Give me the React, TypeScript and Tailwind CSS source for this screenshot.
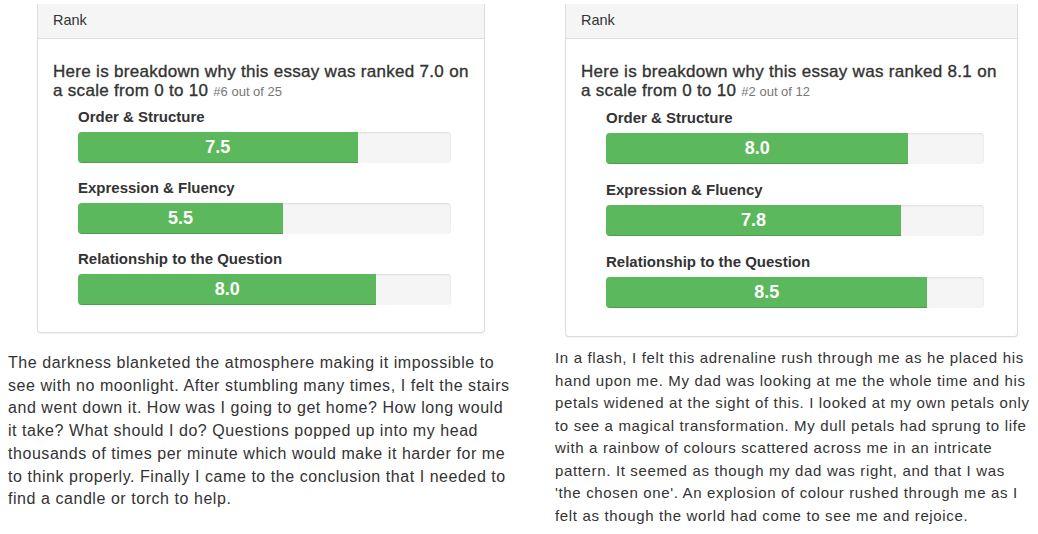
import React from "react";

type Metric = { label: string; score: number };

const left: Metric[] = [
  { label: "Order & Structure", score: 7.5 },
  { label: "Expression & Fluency", score: 5.5 },
  { label: "Relationship to the Question", score: 8.0 },
];

const right: Metric[] = [
  { label: "Order & Structure", score: 8.0 },
  { label: "Expression & Fluency", score: 7.8 },
  { label: "Relationship to the Question", score: 8.5 },
];

function Bar({ score }: { score: number }) {
  return (
    <div className="h-[31px] w-full rounded-[4px] bg-[#f5f5f5] shadow-[inset_0_1px_2px_rgba(0,0,0,0.1)] overflow-hidden">
      <div
        className="h-full bg-[#5cb85c] shadow-[inset_0_-1px_0_rgba(0,0,0,0.15)] text-center text-white font-bold text-[18px] leading-[31px]"
        style={{ width: `${score * 10}%` }}
      >
        {score.toFixed(1)}
      </div>
    </div>
  );
}

function RankPanel({
  ranked,
  place,
  of,
  metrics,
  roomy,
}: {
  ranked: string;
  place: number;
  of: number;
  metrics: Metric[];
  roomy?: boolean;
}) {
  return (
    <div className="border border-t-0 border-[#ddd] rounded-b-[4px] bg-white shadow-[0_1px_1px_rgba(0,0,0,0.05)]">
      <div className="bg-[#f5f5f5] border-b border-[#ddd] px-[15px] h-[35px] flex items-center text-[14.5px] text-[#333]">
        Rank
      </div>
      <div className="pt-[23px] pb-[12px] px-[15px]">
        <h4
          className={`text-[17px] leading-[19px] tracking-[0.3px] text-[#333] [-webkit-text-stroke:0.35px_#333] ${
            roomy ? "mb-[8px]" : "mb-[7px]"
          }`}
        >
          Here is breakdown why this essay was ranked {ranked} on a scale from 0
          to 10{" "}
          <small className="text-[13px] leading-none tracking-normal text-[#777] [-webkit-text-stroke:0]">
            #{place} out of {of}
          </small>
        </h4>
        <div className="pl-[25px] pr-[18px]">
          {metrics.map((m) => (
            <div key={m.label} className={roomy ? "mb-[16px]" : "mb-[15px]"}>
              <div className="text-[15px] leading-[20px] font-bold text-[#333] mb-[5px]">
                {m.label}
              </div>
              <Bar score={m.score} />
            </div>
          ))}
        </div>
      </div>
    </div>
  );
}

export default function App() {
  return (
    <div className="w-[1038px] h-[534px] bg-white overflow-hidden flex font-['Liberation_Sans',Arial,sans-serif]">
      {/* Left essay */}
      <div className="w-[520px] shrink-0 pt-[4px]">
        <div className="ml-[37px] w-[448px]">
          <RankPanel ranked="7.0" place={6} of={25} metrics={left} />
        </div>
        <p className="mt-[19px] ml-[8px] w-[508px] text-[16px] leading-[22.7px] tracking-[0.55px] text-[#333]">
          The darkness blanketed the atmosphere making it impossible to see
          with no moonlight. After stumbling many times, I felt the stairs and
          went down it. How was I going to get home? How long would it take?
          What should I do? Questions popped up into my head thousands of times
          per minute which would make it harder for me to think properly.
          Finally I came to the conclusion that I needed to find a candle or
          torch to help.
        </p>
      </div>

      {/* Right essay */}
      <div className="flex-1 pt-[4px]">
        <div className="ml-[45px] w-[453px]">
          <RankPanel ranked="8.1" place={2} of={12} metrics={right} roomy />
        </div>
        <p className="mt-[10px] ml-[35px] w-[478px] text-[15px] leading-[22.5px] tracking-[0.65px] text-[#333]">
          In a flash, I felt this adrenaline rush through me as he placed his
          hand upon me. My dad was looking at me the whole time and his petals
          widened at the sight of this. I looked at my own petals only to see a
          magical transformation. My dull petals had sprung to life with a
          rainbow of colours scattered across me in an intricate pattern. It
          seemed as though my dad was right, and that I was 'the chosen one'.
          An explosion of colour rushed through me as I felt as though the
          world had come to see me and rejoice.
        </p>
      </div>
    </div>
  );
}
